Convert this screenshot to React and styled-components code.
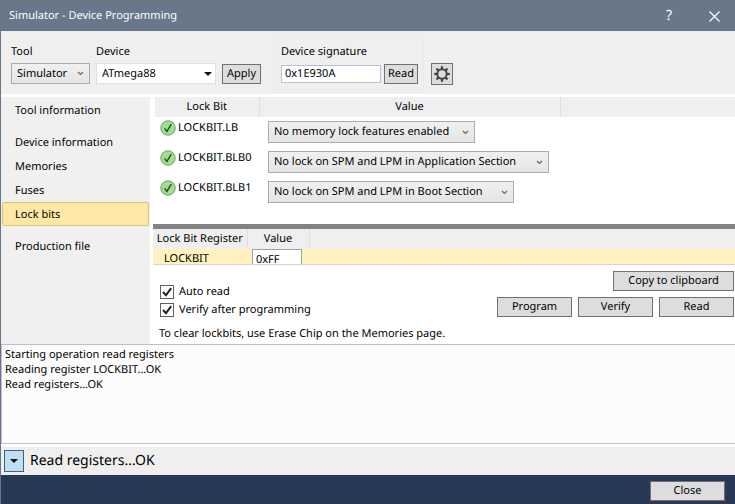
import React, { useState } from "react";
import styled, { createGlobalStyle } from "styled-components";

const GlobalStyle = createGlobalStyle`
  * { box-sizing: border-box; }
  body {
    margin: 0;
    background: #ffffff;
    color: #000000;
    font: 11px/18px "Noto Sans", "Open Sans", sans-serif;
    text-rendering: geometricPrecision;
  }
  button, input, select { font: inherit; color: inherit; margin: 0; text-rendering: inherit; }
  table { border-collapse: collapse; }
`;

const Window = styled.div`
  display: flex;
  flex-direction: column;
  min-height: 100vh;
  border-left: 1px solid #67758a;
  background: #ffffff;
`;

const TitleBar = styled.header`
  display: flex;
  align-items: center;
  height: 31px;
  padding: 0 6px 0 8px;
  border-top: 1px solid #707479;
  background: #68778a;
  color: #ffffff;
`;

const Title = styled.h1`
  flex: 1;
  margin: 0;
  font-size: 11px;
  font-weight: 400;
`;

const TitleButton = styled.button`
  display: flex;
  align-items: center;
  justify-content: center;
  width: 30px;
  height: 30px;
  margin-left: 15px;
  padding: 0;
  border: 0;
  background: transparent;
  font-size: 14px;
`;

const Toolbar = styled.div`
  display: flex;
  height: 63px;
  padding: 3px 10px 4px;
  background: #efefef;
`;

const Field = styled.div`
  display: flex;
  flex-direction: column;
  padding-top: 9px;
  margin-right: 6px;
`;

const FieldLabel = styled.label`
  height: 20px;
`;

const Controls = styled.div`
  display: flex;
  align-items: center;
  gap: ${(p) => p.$gap};
  height: 21px;
`;

const SignatureGroup = styled.div`
  display: flex;
  flex-direction: column;
  margin: 0 7px;
  padding: 8px 5px 0 6px;
  border: 1px solid #ebebeb;
`;

const GearSlot = styled.div`
  padding-top: 29px;
`;

const Picker = styled.div`
  display: inline-grid;
  align-items: center;
  width: ${(p) => p.$width};
  height: ${(p) => p.$height || "21px"};
  vertical-align: top;

  > * { grid-area: 1 / 1; }
  > svg { justify-self: end; margin-right: ${(p) => (p.$editable ? "4px" : "6px")}; pointer-events: none; }
`;

const PickerSelect = styled.select`
  appearance: none;
  width: 100%;
  height: 100%;
  padding: 0 5px;
  border: 1px solid ${(p) => (p.$editable ? "#dcdfe6" : "#acacac")};
  border-radius: 0;
  background: ${(p) => (p.$editable ? "#ffffff" : "linear-gradient(#f0f0f0, #e5e5e5)")};
`;

const TextInput = styled.input`
  width: ${(p) => p.$width};
  height: ${(p) => p.$height};
  padding: 0 3px;
  border: 1px solid ${(p) => p.$border};
  background: #ffffff;
`;

const Button = styled.button`
  display: inline-flex;
  align-items: center;
  justify-content: center;
  width: ${(p) => p.$width || "75px"};
  height: ${(p) => p.$height || "20px"};
  padding: 0;
  border: 1px solid #707070;
  background: #dddddd;
`;

const Body = styled.main`
  display: flex;
  padding-top: 3px;
`;

const Sidebar = styled.nav`
  display: flex;
  flex-direction: column;
  flex: none;
  width: 149px;
  padding: 1px;
  background: #f0f0f0;
`;

const NavItem = styled.a`
  height: 24px;
  margin-bottom: ${(p) => (p.$last ? "8px" : "0")};
  padding: 3px 12px;
  border: 1px solid ${(p) => (p.$active ? "#dfc078" : "transparent")};
  border-radius: 2px;
  background: ${(p) => (p.$active ? "#ffe8a6" : "transparent")};
  color: inherit;
  text-decoration: none;
`;

const Content = styled.section`
  display: flex;
  flex-direction: column;
  flex: 1;
  min-width: 0;
  padding-left: 3px;
`;

const BitsPane = styled.div`
  height: 127px;
  padding-left: 2px;
`;

const Grid = styled.table`
  width: 100%;
  table-layout: fixed;
`;

const Col = styled.col`
  width: ${(p) => p.$width};
`;

const HeadCell = styled.th`
  height: 20px;
  padding: 0;
  border-right: 1px solid ${(p) => (p.$edge ? "#dedede" : "transparent")};
  background: #efefef;
  font-weight: 400;
  white-space: nowrap;
`;

const BitCell = styled.td`
  height: 30px;
  padding: ${(p) => p.$padding};
  vertical-align: top;
`;

const BitName = styled.div`
  display: flex;
  align-items: center;
  gap: 2px;
`;

const RegisterPane = styled.div`
  height: 41px;
  overflow: hidden;
  border-top: 5px solid #838383;
  border-bottom: 1px solid #d0d3da;
`;

const RegisterRow = styled.tr`
  height: 24px;
  background: #fff2bf;
`;

const RegisterCell = styled.td`
  padding: ${(p) => p.$padding || "0"};
  vertical-align: top;
`;

const Actions = styled.div`
  display: flex;
  justify-content: space-between;
  padding: 6px 1px 0 7px;
`;

const CheckList = styled.div`
  display: flex;
  flex-direction: column;
  padding-top: 12px;
`;

const CheckLabel = styled.label`
  display: flex;
  align-items: center;
  gap: 5px;
  height: 18px;
`;

const CheckFrame = styled.span`
  display: grid;
  width: 14px;
  height: 14px;

  > * { grid-area: 1 / 1; }
  > svg { pointer-events: none; visibility: hidden; }
  > input:checked + svg { visibility: visible; }
`;

const CheckInput = styled.input`
  appearance: none;
  width: 14px;
  height: 14px;
  border: 1px solid #606060;
  background: #ffffff;
`;

const ButtonStack = styled.div`
  display: flex;
  flex-direction: column;
  align-items: flex-end;
  gap: 6px;
`;

const ButtonRow = styled.div`
  display: flex;
  gap: 6px;
`;

const Hint = styled.p`
  margin: 0;
  padding: 6px 0 1px 6px;
`;

const Log = styled.div`
  flex: 1;
  padding: 2px 3px;
  border: 1px solid #bcc0d0;
  border-right: 0;
  background: #fcfcfc;
  line-height: 15px;
`;

const StatusBar = styled.div`
  display: flex;
  align-items: center;
  gap: 6px;
  height: 28px;
  margin-top: 3px;
  padding-left: 3px;
  background: #efefef;
  font-size: 14px;
  line-height: 20px;
`;

const StatusToggle = styled.button`
  display: flex;
  align-items: center;
  justify-content: center;
  width: 20px;
  height: 22px;
  padding: 0;
  border: 1px solid #3c6488;
  background: #bfe0f0;
`;

const Footer = styled.footer`
  display: flex;
  justify-content: flex-end;
  height: 29px;
  padding: 6px 10px 0 0;
  background: #293955;
`;

const Chevron = () => (
  <svg width="7" height="5" viewBox="0 0 7 5" fill="none" stroke="#666" strokeWidth="1.2">
    <path d="M1 1l2.5 2.5L6 1" />
  </svg>
);

const Triangle = () => (
  <svg width="8" height="4" viewBox="0 0 8 4">
    <path d="M0 0h8L4 4z" fill="#111" />
  </svg>
);

const Gear = () => (
  <svg width="16" height="16" viewBox="-8 -8 16 16" fill="none" stroke="#444">
    <circle r="4.7" strokeWidth="2" />
    {[0, 45, 90, 135, 180, 225, 270, 315].map((a) => (
      <path key={a} d="M0-5v-2.8" strokeWidth="2.2" transform={`rotate(${a})`} />
    ))}
  </svg>
);

const OkIcon = () => (
  <svg width="16" height="16" viewBox="0 0 16 16">
    <circle cx="8" cy="8" r="7.2" fill="#a2dd90" stroke="#6f9f66" />
    <path d="M4.6 8.4l2.3 3 4.4-7.2" fill="none" stroke="#234d20" strokeWidth="1.4" />
  </svg>
);

const Tick = () => (
  <svg width="14" height="14" viewBox="0 0 14 14">
    <path d="M3 7l3 3.2L11.2 3.2" fill="none" stroke="#222" strokeWidth="2" />
  </svg>
);

const CloseIcon = () => (
  <svg width="11" height="11" viewBox="0 0 11 11" stroke="#fff" strokeWidth="1.2">
    <path d="M.5.5l10 10M10.5.5l-10 10" />
  </svg>
);

function Dropdown({ value, width, height, editable, ...rest }) {
  return (
    <Picker $width={width} $height={height} $editable={editable}>
      <PickerSelect $editable={editable} {...rest}>
        <option>{value}</option>
      </PickerSelect>
      {editable ? <Triangle /> : <Chevron />}
    </Picker>
  );
}

function Check({ children }) {
  const [on, setOn] = useState(true);
  return (
    <CheckLabel>
      <CheckFrame>
        <CheckInput type="checkbox" checked={on} onChange={() => setOn(!on)} />
        <Tick />
      </CheckFrame>
      {children}
    </CheckLabel>
  );
}

const pages = [
  { name: "Tool information", last: true },
  { name: "Device information" },
  { name: "Memories" },
  { name: "Fuses" },
  { name: "Lock bits", last: true },
  { name: "Production file" },
];

const bits = [
  { name: "LOCKBIT.LB", value: "No memory lock features enabled", width: "207px" },
  { name: "LOCKBIT.BLB0", value: "No lock on SPM and LPM in Application Section", width: "281px" },
  { name: "LOCKBIT.BLB1", value: "No lock on SPM and LPM in Boot Section", width: "246px" },
];

export default function App() {
  const [page, setPage] = useState("Lock bits");
  return (
    <>
      <GlobalStyle />
      <Window>
        <TitleBar>
          <Title>Simulator - Device Programming</Title>
          <TitleButton>?</TitleButton>
          <TitleButton aria-label="Close window"><CloseIcon /></TitleButton>
        </TitleBar>

        <Toolbar>
          <Field>
            <FieldLabel htmlFor="tool">Tool</FieldLabel>
            <Dropdown id="tool" value="Simulator" width="79px" />
          </Field>
          <Field>
            <FieldLabel htmlFor="device">Device</FieldLabel>
            <Controls $gap="6px">
              <Dropdown id="device" value="ATmega88" width="120px" editable />
              <Button $width="39px">Apply</Button>
            </Controls>
          </Field>
          <SignatureGroup>
            <FieldLabel htmlFor="signature">Device signature</FieldLabel>
            <Controls $gap="3px">
              <TextInput id="signature" defaultValue="0x1E930A" $width="100px" $height="18px" $border="#b6c0d6" />
              <Button $width="34px">Read</Button>
            </Controls>
          </SignatureGroup>
          <GearSlot>
            <Button $width="22px" $height="22px" aria-label="Settings"><Gear /></Button>
          </GearSlot>
        </Toolbar>

        <Body>
          <Sidebar>
            {pages.map((p) => (
              <NavItem
                key={p.name}
                href="#"
                $last={p.last}
                $active={p.name === page}
                onClick={(e) => { e.preventDefault(); setPage(p.name); }}
              >
                {p.name}
              </NavItem>
            ))}
          </Sidebar>

          <Content>
            <BitsPane>
              <Grid>
                <colgroup><Col $width="104px" /><Col $width="301px" /><Col /></colgroup>
                <thead>
                  <tr><HeadCell $edge>Lock Bit</HeadCell><HeadCell $edge>Value</HeadCell><HeadCell /></tr>
                </thead>
                <tbody>
                  {bits.map((b) => (
                    <tr key={b.name}>
                      <BitCell $padding="2px 0 0 5px">
                        <BitName><OkIcon />{b.name}</BitName>
                      </BitCell>
                      <BitCell $padding="4px 0 0 9px">
                        <Dropdown aria-label={b.name} value={b.value} width={b.width} height="22px" />
                      </BitCell>
                      <BitCell />
                    </tr>
                  ))}
                </tbody>
              </Grid>
            </BitsPane>

            <RegisterPane>
              <Grid>
                <colgroup><Col $width="94px" /><Col $width="62px" /><Col /></colgroup>
                <thead>
                  <tr><HeadCell $edge>Lock Bit Register</HeadCell><HeadCell $edge>Value</HeadCell><HeadCell /></tr>
                </thead>
                <tbody>
                  <RegisterRow>
                    <RegisterCell $padding="1px 0 0 11px">LOCKBIT</RegisterCell>
                    <RegisterCell $padding="0 0 0 5px">
                      <TextInput aria-label="LOCKBIT" defaultValue="0xFF" $width="50px" $height="20px" $border="#9aa0ae" />
                    </RegisterCell>
                    <RegisterCell />
                  </RegisterRow>
                </tbody>
              </Grid>
            </RegisterPane>

            <Actions>
              <CheckList>
                <Check>Auto read</Check>
                <Check>Verify after programming</Check>
              </CheckList>
              <ButtonStack>
                <Button $width="121px">Copy to clipboard</Button>
                <ButtonRow>
                  <Button>Program</Button>
                  <Button>Verify</Button>
                  <Button>Read</Button>
                </ButtonRow>
              </ButtonStack>
            </Actions>
            <Hint>To clear lockbits, use Erase Chip on the Memories page.</Hint>
          </Content>
        </Body>

        <Log role="log">
          <div>Starting operation read registers</div>
          <div>Reading register LOCKBIT...OK</div>
          <div>Read registers...OK</div>
        </Log>

        <StatusBar>
          <StatusToggle aria-label="Toggle log"><Triangle /></StatusToggle>
          Read registers...OK
        </StatusBar>

        <Footer>
          <Button>Close</Button>
        </Footer>
      </Window>
    </>
  );
}
